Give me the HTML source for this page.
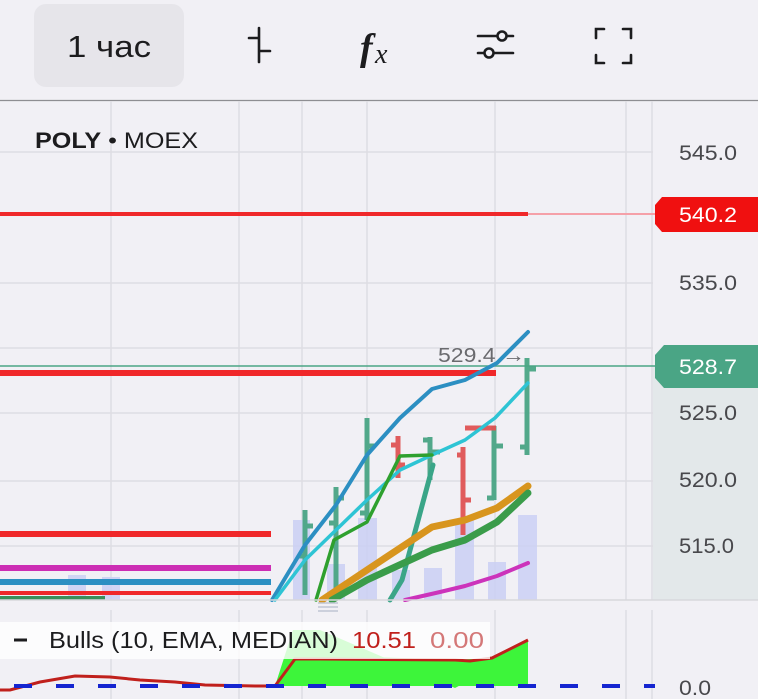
<!DOCTYPE html>
<html><head><meta charset="utf-8"><style>
html,body{margin:0;padding:0;background:#f1f0f5;}
body{width:758px;height:699px;overflow:hidden;position:relative;font-family:"Liberation Sans",sans-serif;}
svg{position:absolute;left:0;top:0;}
</style></head><body>
<svg width="758" height="699" viewBox="0 0 758 699" xmlns="http://www.w3.org/2000/svg" font-family="Liberation Sans, sans-serif">
<rect width="758" height="699" fill="#f1f0f5"/>
<rect x="34" y="4" width="150" height="83" rx="12" fill="#e6e5ea"/>
<text x="109" y="57" font-size="31" text-anchor="middle" fill="#1c1c1e" textLength="84" lengthAdjust="spacingAndGlyphs">1 час</text>
<g stroke="#1c1c1e" stroke-width="2.6" fill="none" stroke-linecap="round">
<path d="M259 28V62M249 38H259M259 51H270"/>
<path d="M478 36H497M507 36H513M478 53H484M494 53H513"/>
<circle cx="502" cy="36" r="4.5"/><circle cx="489" cy="53" r="4.5"/>
<path d="M596 38V29H604M623 29H631V38M596 55V63H604M623 63H631V55"/>
</g>
<text x="360" y="60" font-family="Liberation Serif, serif" font-style="italic" font-weight="bold" font-size="38" fill="#1c1c1e">f</text>
<text x="375" y="63" font-family="Liberation Serif, serif" font-style="italic" font-size="28" fill="#1c1c1e">x</text>
<line x1="0" y1="100.5" x2="758" y2="100.5" stroke="#8e8e92" stroke-width="1.2"/>
<rect x="653" y="366" width="105" height="234" fill="#e3e8ea"/>
<g stroke="#dedde3" stroke-width="1.5">
<path d="M111 101V600M239 101V600M302 101V600M367 101V600M495 101V600M626 101V600M652 101V600"/>
<path d="M0 152H653M0 283H653M0 348H653M0 413H653M0 481H653M0 546H653"/>
<path d="M111 610V699M239 610V699M302 610V699M367 610V699M495 610V699M626 610V699M652 610V699"/>
</g>
<text x="35" y="148" font-size="22" fill="#1c1c1e" textLength="163" lengthAdjust="spacingAndGlyphs"><tspan font-weight="bold">POLY</tspan> • MOEX</text>
<g font-size="21" fill="#48484c">
<text x="679" y="160" textLength="58" lengthAdjust="spacingAndGlyphs">545.0</text>
<text x="679" y="290" textLength="58" lengthAdjust="spacingAndGlyphs">535.0</text>
<text x="679" y="420" textLength="58" lengthAdjust="spacingAndGlyphs">525.0</text>
<text x="679" y="487" textLength="58" lengthAdjust="spacingAndGlyphs">520.0</text>
<text x="679" y="553" textLength="55" lengthAdjust="spacingAndGlyphs">515.0</text>
<text x="679" y="695" textLength="32" lengthAdjust="spacingAndGlyphs">0.0</text>
</g>
<g fill="#cbd0f4" opacity="0.85">
<rect x="293" y="520" width="17" height="80"/><rect x="327" y="564" width="18" height="36"/>
<rect x="358" y="518" width="19" height="82"/><rect x="392" y="570" width="18" height="30"/>
<rect x="424" y="568" width="18" height="32"/><rect x="455" y="520" width="19" height="80"/>
<rect x="488" y="562" width="18" height="38"/><rect x="518" y="515" width="19" height="85"/>
<rect x="68" y="575" width="18" height="25"/><rect x="102" y="577" width="18" height="23"/>
</g>
<line x1="0" y1="214" x2="528" y2="214" stroke="#f0282a" stroke-width="4"/>
<line x1="528" y1="214" x2="655" y2="214" stroke="#f5a0a8" stroke-width="2"/>
<line x1="0" y1="366" x2="758" y2="366" stroke="#4aa585" stroke-width="1.5"/>
<line x1="0" y1="373" x2="496" y2="373" stroke="#f0282a" stroke-width="6"/>
<line x1="0" y1="534" x2="271" y2="534" stroke="#f0282a" stroke-width="6"/>
<line x1="0" y1="568" x2="271" y2="568" stroke="#cc2eb4" stroke-width="6"/>
<line x1="0" y1="582" x2="271" y2="582" stroke="#2c8fc2" stroke-width="6"/>
<line x1="0" y1="593" x2="271" y2="593" stroke="#f0282a" stroke-width="4"/>
<line x1="0" y1="598" x2="105" y2="598" stroke="#3a8f5a" stroke-width="4"/>
<g stroke="#4aa585" stroke-width="5" fill="none" opacity="0.95">
<path d="M305 510V595M305 526H313M305 556H298"/>
<path d="M336 487V590M336 498H344M336 523H329"/>
<path d="M367 418V520M367 446H375M367 513H360"/>
<path d="M430 437V480M430 452H440M430 440H423"/>
<path d="M494 426V500M494 446H503M494 498H487"/>
<path d="M527 358V455M527 369H536M527 447H520"/>
</g>
<g stroke="#e05454" stroke-width="5" fill="none" opacity="0.95">
<path d="M398 436V478M398 445H391M398 465H405"/>
<path d="M463 447V535M463 455H457M463 500H471"/>
<path d="M465 428H496"/>
</g>
<g fill="none" stroke-linejoin="round" stroke-linecap="round">
<polyline points="272,600 305,545 336,505 367,455 400,418 432,389 465,380 497,363 528,332" stroke="#2c8fc2" stroke-width="4"/>
<polyline points="275,600 305,560 336,530 367,500 400,470 432,455 465,440 495,418 528,383" stroke="#2ec4d4" stroke-width="3.5"/>
<polyline points="316,600 334,540 367,522 400,456 432,455" stroke="#2ea02e" stroke-width="3.5"/>
<polyline points="390,600 402,580 433,465" stroke="#3aa588" stroke-width="5"/>
<polyline points="322,600 367,570 432,527 465,520 497,508 528,486" stroke="#d8951e" stroke-width="7"/>
<polyline points="332,600 367,580 432,550 465,540 497,522 528,493" stroke="#3a9c4a" stroke-width="7"/>
<polyline points="405,600 440,592 465,586 497,576 528,563" stroke="#cc33bb" stroke-width="4"/>
</g>
<text x="438" y="362" font-size="20" fill="#6a6a6e" textLength="87" lengthAdjust="spacingAndGlyphs">529.4 →</text>
<path d="M662 197H758V232H662L655 224V205Z" fill="#f01010"/>
<text x="679" y="222" font-size="21" fill="#ffffff" textLength="58" lengthAdjust="spacingAndGlyphs">540.2</text>
<path d="M664 345H758V388H664L655 378V355Z" fill="#4aa585"/>
<text x="679" y="374" font-size="21" fill="#ffffff" textLength="58" lengthAdjust="spacingAndGlyphs">528.7</text>
<line x1="0" y1="600" x2="758" y2="600" stroke="#d8d7dc" stroke-width="1.5"/>
<path d="M318 603H338M318 607H338M318 611H338" stroke="#bfc6d4" stroke-width="1.5"/>
<path d="M275 686L293 630L320 630L455 688L470 680L490 658L528 640V686Z" fill="#3df53a"/>
<path d="M275 686L295 660L320 655L455 660L470 659L490 660L528 643V686Z" fill="#3df53a"/>
<polyline points="0,690 10,690 40,682 75,676 110,677 140,680 175,682 205,685 255,686 275,686 295,659 320,659 455,660 470,661 492,658 528,640" fill="none" stroke="#c0201c" stroke-width="3"/>
<line x1="0" y1="686" x2="655" y2="686" stroke="#1525d0" stroke-width="4" stroke-dasharray="18,24" stroke-dashoffset="-14"/>
<rect x="0" y="622" width="490" height="37" fill="#ffffff" opacity="0.8"/>
<line x1="14" y1="640" x2="27" y2="640" stroke="#1c1c1e" stroke-width="3"/>
<text x="49" y="648" font-size="23" fill="#1c1c1e" textLength="289" lengthAdjust="spacingAndGlyphs">Bulls (10, EMA, MEDIAN)</text>
<text x="352" y="648" font-size="23" fill="#c0201c" textLength="64" lengthAdjust="spacingAndGlyphs">10.51</text>
<text x="430" y="648" font-size="23" fill="#d47878" textLength="54" lengthAdjust="spacingAndGlyphs">0.00</text>
</svg>
</body></html>
